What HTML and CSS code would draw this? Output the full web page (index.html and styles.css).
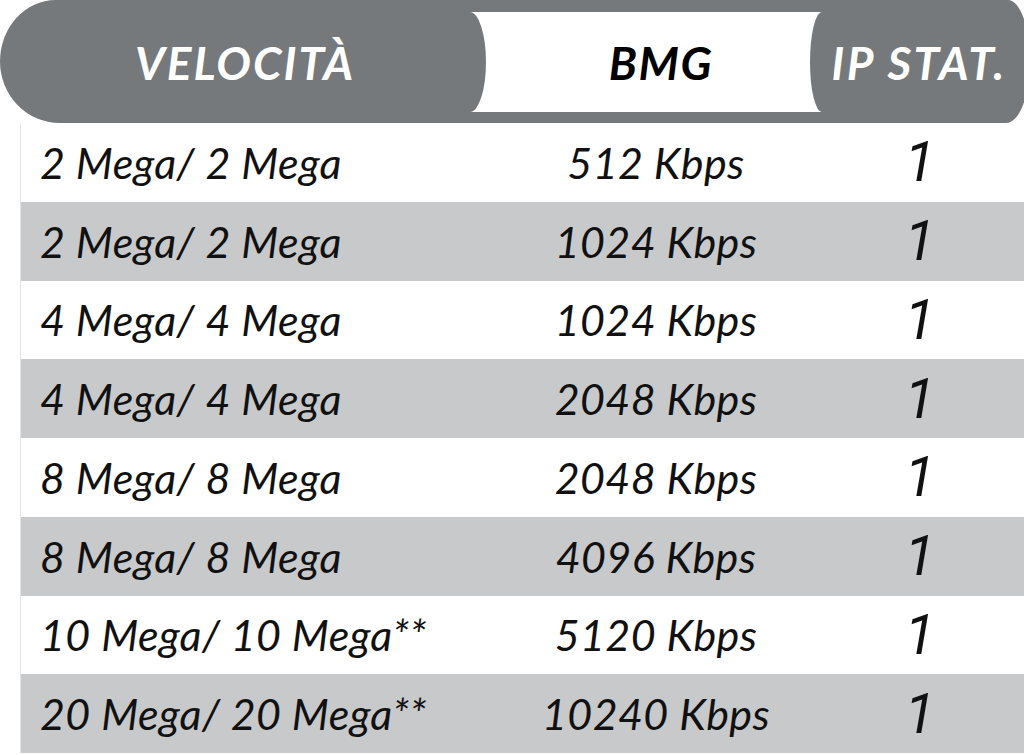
FILE: index.html
```html
<!DOCTYPE html>
<html lang="it">
<head>
<meta charset="utf-8">
<title>Velocità BMG IP</title>
<link rel="stylesheet" href="styles.css">
</head>
<body>
<div class="sheet">
  <div class="head">
    <div class="hcell hleft">VELOCITÀ</div>
    <div class="hcell hmid">BMG</div>
    <div class="hcell hright">IP STAT.</div>
  </div>
  <div class="body">
    <div class="row"><div class="c1">2 Mega/ 2 Mega</div><div class="c2">512 Kbps</div><div class="c3">1</div></div>
    <div class="row alt"><div class="c1">2 Mega/ 2 Mega</div><div class="c2">1024 Kbps</div><div class="c3">1</div></div>
    <div class="row"><div class="c1">4 Mega/ 4 Mega</div><div class="c2">1024 Kbps</div><div class="c3">1</div></div>
    <div class="row alt"><div class="c1">4 Mega/ 4 Mega</div><div class="c2">2048 Kbps</div><div class="c3">1</div></div>
    <div class="row"><div class="c1">8 Mega/ 8 Mega</div><div class="c2">2048 Kbps</div><div class="c3">1</div></div>
    <div class="row alt"><div class="c1">8 Mega/ 8 Mega</div><div class="c2">4096 Kbps</div><div class="c3">1</div></div>
    <div class="row"><div class="c1">10 Mega/ 10 Mega**</div><div class="c2">5120 Kbps</div><div class="c3">1</div></div>
    <div class="row alt"><div class="c1">20 Mega/ 20 Mega**</div><div class="c2">10240 Kbps</div><div class="c3">1</div></div>
  </div>
</div>
</body>
</html>
```

FILE: styles.css
```css
html, body {
  margin: 0;
  padding: 0;
  background: #ffffff;
  overflow: hidden;
}

.sheet {
  width: 1024px;
  height: 755px;
  font-family: "Lato", "Open Sans", sans-serif;
  color: #111111;
}

.head {
  display: grid;
  grid-template-columns: 470px 352px 1fr;
  height: 123px;
  padding: 12px 0 11px 0;
  box-sizing: border-box;
  background: #76797c;
  border-radius: 56px 22px 24px 60px / 62px 62px 62px 62px;
  margin-right: -6px;
}

.hcell {
  display: flex;
  align-items: center;
  justify-content: center;
  font-weight: 700;
  font-style: italic;
  font-size: 46px;
  letter-spacing: 2px;
}

.hleft {
  color: #ffffff;
  padding-left: 20px;
}

.hmid {
  position: relative;
  background: #ffffff;
  color: #000000;
  padding-left: 30px;
  letter-spacing: 1.5px;
}

.hmid::before,
.hmid::after {
  content: "";
  position: absolute;
  top: 0;
  bottom: 0;
  background: #76797c;
  border-radius: 50%;
}

.hmid::before {
  left: -16px;
  width: 32px;
}

.hmid::after {
  right: -12px;
  width: 24px;
}

.hright {
  color: #ffffff;
  padding-left: 2px;
  padding-right: 16px;
  letter-spacing: 2.5px;
}

.body {
  margin-left: 20px;
  border-left: 1px solid #e4e4e6;
}

.row {
  display: grid;
  grid-template-columns: 469px 332px 1fr;
  height: 78.75px;
  align-items: center;
  font-style: italic;
  font-size: 43px;
  letter-spacing: 0.4px;
}

.row.alt {
  background: #c8c9cb;
}

.c1 {
  padding-left: 19px;
  white-space: nowrap;
}

.c2 {
  text-align: center;
  white-space: nowrap;
}

.c3 {
  text-align: center;
  font-family: "Roboto", "Liberation Sans", Arial, sans-serif;
  font-weight: 400;
  font-size: 56px;
  letter-spacing: 0;
  padding-right: 6px;
}
```
